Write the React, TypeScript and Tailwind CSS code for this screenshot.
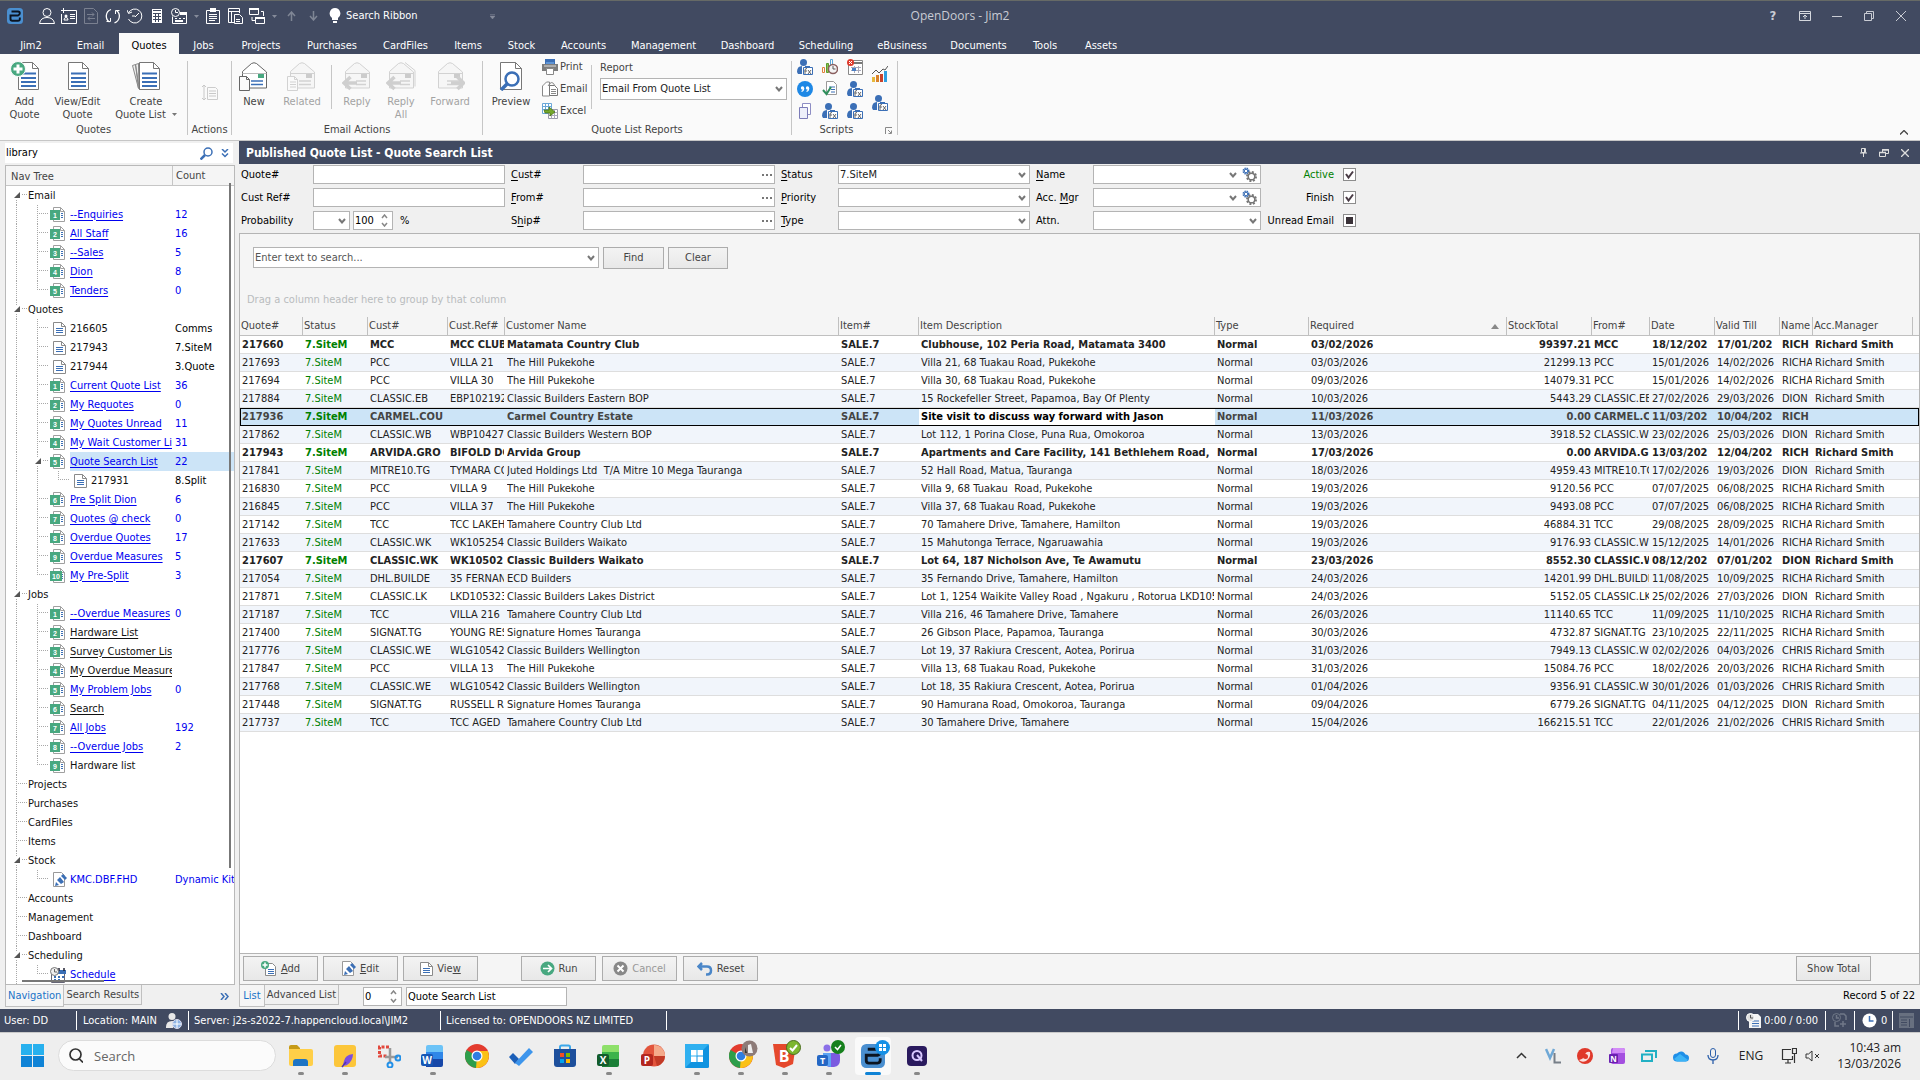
import type { ReactNode } from 'react';
import clsx from 'clsx';

/* ------------------------------------------------------------------ */
/* Data                                                                */
/* ------------------------------------------------------------------ */

const tabs = [
  { name: 'Jim2', width: 'w-[62px]' },
  { name: 'Email', width: 'w-[57px]' },
  { name: 'Quotes', width: 'w-[60px]' },
  { name: 'Jobs', width: 'w-[49px]' },
  { name: 'Projects', width: 'w-[66px]' },
  { name: 'Purchases', width: 'w-[76px]' },
  { name: 'CardFiles', width: 'w-[71px]' },
  { name: 'Items', width: 'w-[54px]' },
  { name: 'Stock', width: 'w-[53px]' },
  { name: 'Accounts', width: 'w-[71px]' },
  { name: 'Management', width: 'w-[89px]' },
  { name: 'Dashboard', width: 'w-[79px]' },
  { name: 'Scheduling', width: 'w-[78px]' },
  { name: 'eBusiness', width: 'w-[74px]' },
  { name: 'Documents', width: 'w-[79px]' },
  { name: 'Tools', width: 'w-[54px]' },
  { name: 'Assets', width: 'w-[58px]' },
];

type NavNode = {
  label: string;
  count?: string;
  depth: number;
  kind?: 'list' | 'doc' | 'edit' | 'calendar';
  num?: number;
  tone?: 'blue' | 'black';
  plain?: boolean;
  open?: boolean;
  last?: boolean;
  selected?: boolean;
};

const list = (num: number, label: string, count = '', extra: Partial<NavNode> = {}): NavNode => ({
  depth: 1, kind: 'list', num, label, count, tone: 'blue', ...extra,
});

const navTree: NavNode[] = [
  { depth: 0, label: 'Email', open: true },
  list(1, '--Enquiries', '12'),
  list(2, 'All Staff', '16'),
  list(3, '--Sales', '5'),
  list(4, 'Dion', '8'),
  list(5, 'Tenders', '0', { last: true }),
  { depth: 0, label: 'Quotes', open: true },
  { depth: 1, kind: 'doc', label: '216605', count: 'Comms', tone: 'black', plain: true },
  { depth: 1, kind: 'doc', label: '217943', count: '7.SiteM', tone: 'black', plain: true },
  { depth: 1, kind: 'doc', label: '217944', count: '3.Quote', tone: 'black', plain: true },
  list(1, 'Current Quote List', '36'),
  list(2, 'My Requotes', '0'),
  list(3, 'My Quotes Unread', '11'),
  list(4, 'My Wait Customer Lis', '31'),
  list(5, 'Quote Search List', '22', { open: true, selected: true }),
  { depth: 2, kind: 'doc', label: '217931', count: '8.Split', tone: 'black', plain: true, last: true },
  list(6, 'Pre Split Dion', '6'),
  list(7, 'Quotes @ check', '0'),
  list(8, 'Overdue Quotes', '17'),
  list(9, 'Overdue Measures', '5'),
  list(10, 'My Pre-Split', '3', { last: true }),
  { depth: 0, label: 'Jobs', open: true },
  list(1, '--Overdue Measures', '0'),
  list(2, 'Hardware List', '', { tone: 'black' }),
  list(3, 'Survey Customer List', '', { tone: 'black' }),
  list(4, 'My Overdue Measure', '', { tone: 'black' }),
  list(5, 'My Problem Jobs', '0'),
  list(6, 'Search', '', { tone: 'black' }),
  list(7, 'All Jobs', '192'),
  list(8, '--Overdue Jobs', '2'),
  list(9, 'Hardware list', '', { tone: 'black', plain: true, last: true }),
  { depth: 0, label: 'Projects' },
  { depth: 0, label: 'Purchases' },
  { depth: 0, label: 'CardFiles' },
  { depth: 0, label: 'Items' },
  { depth: 0, label: 'Stock', open: true },
  { depth: 1, kind: 'edit', label: 'KMC.DBF.FHD', count: 'Dynamic Kitt', tone: 'blue', plain: true, last: true },
  { depth: 0, label: 'Accounts' },
  { depth: 0, label: 'Management' },
  { depth: 0, label: 'Dashboard' },
  { depth: 0, label: 'Scheduling', open: true },
  { depth: 1, kind: 'calendar', label: 'Schedule', tone: 'blue', last: true },
];

const columns = [
  { name: 'Quote#', width: 'w-[63px]' },
  { name: 'Status', width: 'w-[65px]' },
  { name: 'Cust#', width: 'w-[80px]' },
  { name: 'Cust.Ref#', width: 'w-[57px]' },
  { name: 'Customer Name', width: 'w-[334px]' },
  { name: 'Item#', width: 'w-[80px]' },
  { name: 'Item Description', width: 'w-[296px]' },
  { name: 'Type', width: 'w-[94px]' },
  { name: 'Required', width: 'w-auto' },
  { name: 'StockTotal', width: 'w-[85px]' },
  { name: 'From#', width: 'w-[58px]' },
  { name: 'Date', width: 'w-[65px]' },
  { name: 'Valid Till', width: 'w-[65px]' },
  { name: 'Name', width: 'w-[33px]' },
  { name: 'Acc.Manager', width: 'w-[100px]' },
];

// quote, cust, ref, customer, description, required, total, from, date, valid till, name
const quotes: string[][] = [
  ['217660', 'MCC', 'MCC CLUB', 'Matamata Country Club', 'Clubhouse, 102 Peria Road, Matamata 3400', '03/02/2026', '99397.21', 'MCC', '18/12/202', '17/01/202', 'RICH'],
  ['217693', 'PCC', 'VILLA 21', 'The Hill Pukekohe', 'Villa 21, 68 Tuakau Road, Pukekohe', '03/03/2026', '21299.13', 'PCC', '15/01/2026', '14/02/2026', 'RICHA'],
  ['217694', 'PCC', 'VILLA 30', 'The Hill Pukekohe', 'Villa 30, 68 Tuakau Road, Pukekohe', '09/03/2026', '14079.31', 'PCC', '15/01/2026', '14/02/2026', 'RICHA'],
  ['217884', 'CLASSIC.EB', 'EBP102192', 'Classic Builders Eastern BOP', '15 Rockefeller Street, Papamoa, Bay Of Plenty', '10/03/2026', '5443.29', 'CLASSIC.EB', '27/02/2026', '29/03/2026', 'DION'],
  ['217936', 'CARMEL.COU', '', 'Carmel Country Estate', 'Site visit to discuss way forward with Jason', '11/03/2026', '0.00', 'CARMEL.C', '11/03/202', '10/04/202', 'RICH'],
  ['217862', 'CLASSIC.WB', 'WBP10427', 'Classic Builders Western BOP', 'Lot 112, 1 Porina Close, Puna Rua, Omokoroa', '13/03/2026', '3918.52', 'CLASSIC.W', '23/02/2026', '25/03/2026', 'DION'],
  ['217943', 'ARVIDA.GRO', 'BIFOLD DO', 'Arvida Group', 'Apartments and Care Facility, 141 Bethlehem Road,', '17/03/2026', '0.00', 'ARVIDA.G', '13/03/202', '12/04/202', 'RICH'],
  ['217841', 'MITRE10.TG', 'TYMARA CO', 'Juted Holdings Ltd  T/A Mitre 10 Mega Tauranga', '52 Hall Road, Matua, Tauranga', '18/03/2026', '4959.43', 'MITRE10.TG', '17/02/2026', '19/03/2026', 'DION'],
  ['216830', 'PCC', 'VILLA 9', 'The Hill Pukekohe', 'Villa 9, 68 Tuakau  Road, Pukekohe', '19/03/2026', '9120.56', 'PCC', '07/07/2025', '06/08/2025', 'RICHA'],
  ['216845', 'PCC', 'VILLA 37', 'The Hill Pukekohe', 'Villa 37, 68 Tuakau Road, Pukekohe', '19/03/2026', '9493.08', 'PCC', '07/07/2025', '06/08/2025', 'RICHA'],
  ['217142', 'TCC', 'TCC LAKEH', 'Tamahere Country Club Ltd', '70 Tamahere Drive, Tamahere, Hamilton', '19/03/2026', '46884.31', 'TCC', '29/08/2025', '28/09/2025', 'RICHA'],
  ['217633', 'CLASSIC.WK', 'WK105254', 'Classic Builders Waikato', '15 Mahutonga Terrace, Ngaruawahia', '19/03/2026', '9176.93', 'CLASSIC.W', '15/12/2025', '14/01/2026', 'RICHA'],
  ['217607', 'CLASSIC.WK', 'WK10502', 'Classic Builders Waikato', 'Lot 64, 187 Nicholson Ave, Te Awamutu', '23/03/2026', '8552.30', 'CLASSIC.W', '08/12/202', '07/01/202', 'DION'],
  ['217054', 'DHL.BUILDE', '35 FERNAN', 'ECD Builders', '35 Fernando Drive, Tamahere, Hamilton', '24/03/2026', '14201.99', 'DHL.BUILDE', '11/08/2025', '10/09/2025', 'RICHA'],
  ['217871', 'CLASSIC.LK', 'LKD105323', 'Classic Builders Lakes District', 'Lot 1, 1254 Waikite Valley Road , Ngakuru , Rotorua LKD1053', '24/03/2026', '5152.05', 'CLASSIC.LK', '25/02/2026', '27/03/2026', 'DION'],
  ['217187', 'TCC', 'VILLA 216', 'Tamahere Country Club Ltd', 'Villa 216, 46 Tamahere Drive, Tamahere', '26/03/2026', '11140.65', 'TCC', '11/09/2025', '11/10/2025', 'RICHA'],
  ['217400', 'SIGNAT.TG', 'YOUNG RES', 'Signature Homes Tauranga', '26 Gibson Place, Papamoa, Tauranga', '30/03/2026', '4732.87', 'SIGNAT.TG', '23/10/2025', '22/11/2025', 'RICHA'],
  ['217776', 'CLASSIC.WE', 'WLG10542', 'Classic Builders Wellington', 'Lot 19, 37 Rakiura Crescent, Aotea, Porirua', '31/03/2026', '7949.13', 'CLASSIC.W', '02/02/2026', '04/03/2026', 'CHRIS'],
  ['217847', 'PCC', 'VILLA 13', 'The Hill Pukekohe', 'Villa 13, 68 Tuakau Road, Pukekohe', '31/03/2026', '15084.76', 'PCC', '18/02/2026', '20/03/2026', 'RICHA'],
  ['217768', 'CLASSIC.WE', 'WLG10542', 'Classic Builders Wellington', 'Lot 18, 35 Rakiura Crescent, Aotea, Porirua', '01/04/2026', '9356.91', 'CLASSIC.W', '30/01/2026', '01/03/2026', 'CHRIS'],
  ['217448', 'SIGNAT.TG', 'RUSSELL RE', 'Signature Homes Tauranga', '90 Hamurana Road, Omokoroa, Tauranga', '09/04/2026', '6779.26', 'SIGNAT.TG', '04/11/2025', '04/12/2025', 'DION'],
  ['217737', 'TCC', 'TCC AGED', 'Tamahere Country Club Ltd', '30 Tamahere Drive, Tamahere', '15/04/2026', '166215.51', 'TCC', '22/01/2026', '21/02/2026', 'CHRIS'],
];

const boldQuotes = ['217660', '217936', '217943', '217607'];
const selectedQuote = '217936';

/* ------------------------------------------------------------------ */
/* Small icons                                                         */
/* ------------------------------------------------------------------ */

function Svg({ size = 16, w, h, box, children, className }: {
  size?: number; w?: number; h?: number; box?: string; children: ReactNode; className?: string;
}) {
  const width = w ?? size;
  const height = h ?? size;
  return (
    <svg width={width} height={height} viewBox={box ?? `0 0 ${width} ${height}`} fill="none" className={clsx('shrink-0', className)} aria-hidden="true">
      {children}
    </svg>
  );
}

const Chevron = ({ className }: { className?: string }) => (
  <Svg w={8} h={6} className={className}><path d="M1 1l3 3.500L7 1" stroke="#777" strokeWidth="2" /></Svg>
);

const Caret = ({ color = '#777' }: { color?: string }) => (
  <Svg w={5} h={3}><path d="M0 0h5L2.500 3z" fill={color} /></Svg>
);

const JimLogo = ({ size = 16 }: { size?: number }) => (
  <Svg size={size} box="0 0 16 16">
    <rect width="16" height="16" rx="3.500" fill="#4a8fd0" />
    <path d="M4.500 3.500H11q1.800 0 1.800 1.800T11 7.500H3.500V11q0 1.700 1.700 1.700H11q1.800 0 1.800-1.800V9.500" stroke="#0b1420" strokeWidth="1.900" />
  </Svg>
);

function DocIcon({ disabled }: { disabled?: boolean }) {
  return (
    <Svg w={13} h={14}>
      <path d="M.5.5h8l4 4v9H.500z" fill="#fff" stroke={disabled ? '#ccc' : '#8a8a8a'} />
      <path d="M8.500.500v4h4" stroke={disabled ? '#ccc' : '#8a8a8a'} />
      <path d="M3 6.500h7M3 8.500h7M3 10.500h7" stroke={disabled ? '#ccc' : '#3b6fb6'} />
    </Svg>
  );
}

function ListIcon({ num = 0 }: { num?: number }) {
  const wide = num > 9;
  return (
    <Svg w={15} h={15}>
      <path d="M3.500.500h7l4 4v10h-11z" fill="#fff" stroke="#a0a0a0" />
      <path d="M10.500.500v4h4" stroke="#a0a0a0" />
      <path d="M11 6.500h2M11 8.500h2M11 10.500h2" stroke="#3b6fb6" />
      <rect y="3" width={wide ? 12 : 10} height="10" fill="#48a880" />
      <text x={wide ? 6 : 5} y="11" textAnchor="middle" fontSize="7" fontWeight="700" fill="#fff" fontFamily="Liberation Sans, sans-serif">{num}</text>
    </Svg>
  );
}

const EditIcon = () => (
  <Svg w={14} h={15}>
    <path d="M.5.5h8l3 3v11H.500z" fill="#fff" stroke="#999" />
    <path d="M2 14l1-4 3 3zM4 8l3-3 4 5-3 2zM8 4l2-2 4 4-2 2z" fill="#3b6fb6" />
  </Svg>
);

const CalendarIcon = () => (
  <Svg w={16} h={16}>
    <path d="M1.500 6.500h13v9h-13z" fill="#fff" stroke="#667" />
    <path d="M7 3h9v4H7z" fill="#3b6fb6" />
    <path d="M9 1v3M14 1v3" stroke="#223" strokeWidth="1.500" />
    <path d="M4 9h2v2H4zM8 9h2v2H8zM12 9h2v2h-2zM4 12h2v2H4zM8 12h2v2H8z" fill="#3b6fb6" />
    <circle cx="4.500" cy="4.500" r="4" fill="#eee" stroke="#777" />
    <path d="M4.500 2v3H7" stroke="#666" />
  </Svg>
);

const AddDocIcon = () => (
  <Svg w={16} h={15}>
    <path d="M4.500 2.500h7l3 3v9h-10z" fill="#fff" stroke="#8a8a8a" />
    <path d="M7 8.500h6M7 10.500h6M7 12.500h6" stroke="#3b6fb6" />
    <circle cx="4" cy="4" r="4" fill="#48a880" />
    <path d="M4 1.500v5M1.500 4h5" stroke="#fff" strokeWidth="1.500" />
  </Svg>
);

function BigDoc({ plus, stack }: { plus?: boolean; stack?: boolean }) {
  return (
    <Svg w={30} h={30} box={plus || stack ? '0 0 30 30' : '3 0 30 30'}>
      {stack && <path d="M1.500 4.500l3-1 3 24zM4.500 3.500l3-1 1 26zM7.500 2.500l3-1v27h-2z" fill="#eee" stroke="#888" />}
      <path d="M8.500 1.500h14l6 6v21h-20z" fill="#fff" stroke="#777" />
      <path d="M22.500 1.500v6h6" stroke="#777" />
      <path d="M11 12.500h15M11 17h15M11 21h15M11 25h15" stroke="#3b6fb6" strokeWidth="2" />
      {plus && (
        <>
          <circle cx="8" cy="8" r="7.500" fill="#48a880" stroke="#fafafa" />
          <path d="M8 3.500v9M3.500 8h9" stroke="#fff" strokeWidth="3" />
        </>
      )}
    </Svg>
  );
}

function Envelope({ kind }: { kind: 'new' | 'related' | 'reply' | 'replyAll' | 'forward' }) {
  const off = kind !== 'new';
  const line = off ? '#d2d2d2' : '#666';
  return (
    <Svg w={30} h={30}>
      {kind === 'replyAll' && <path d="M19 1.500l10 8v16" stroke={line} />}
      <path d="M3.500 10.500l9-8q2.500-1.500 5 0l10 8.500v16h-24z" fill={off ? '#f6f6f6' : '#fff'} stroke={line} />
      <path d="M3.500 12.500h24" stroke={off ? line : '#bbb'} />
      <rect x="19" y="13" width="6" height="4" fill={off ? '#ccc' : '#48a880'} />
      <path d={kind === 'reply' || kind === 'replyAll' ? 'M14 20h10M14 23.500h10' : 'M12 20h12M12 23.500h12'} stroke={off ? '#d2d2d2' : '#3b6fb6'} strokeWidth="1.500" />
      {(kind === 'new' || kind === 'related') && (
        <>
          <path d="M.5 15.500h7l3 3v11H.500z" fill="#fafafa" stroke={line} />
          <path d="M7.500 15.500v3h3" stroke={line} />
          {off && <path d="M3 21h6M3 23.500h6M3 26h6" stroke={line} />}
        </>
      )}
      {(kind === 'reply' || kind === 'replyAll') && <path d="M8.500 16l-6.500 6 6.500 6M2 22h13" stroke="#cfcfcf" strokeWidth="3.500" />}
      {kind === 'forward' && <path d="M22.500 16l6 6-6 6M28 22H16" stroke="#cfcfcf" strokeWidth="3.500" />}
    </Svg>
  );
}

const PreviewIcon = () => (
  <Svg w={24} h={30}>
    <path d="M1.500 1.500h15l6 6v21h-21z" fill="#fff" stroke="#777" />
    <path d="M16.500 1.500v6h6" stroke="#777" />
    <circle cx="13" cy="18" r="6.500" fill="#fff" stroke="#3b6fb6" strokeWidth="2.500" />
    <path d="M8 23l-6 6" stroke="#3b6fb6" strokeWidth="3.500" />
  </Svg>
);

const PrinterIcon = () => (
  <Svg size={16}>
    <path d="M3 0h10v6H3z" fill="#3b6fb6" /><path d="M4 3h8v3H4z" fill="#5f95d6" />
    <path d="M0 5h16v7H0z" fill="#7d7d7d" /><path d="M2 7h12" stroke="#ddd" />
    <path d="M4.500 9.500h7v6h-7z" fill="#fff" stroke="#888" />
  </Svg>
);

const MailDocIcon = () => (
  <Svg size={16}>
    <path d="M.5 5l4-4h3v14h-7z" fill="#fff" stroke="#888" />
    <path d="M6 5q4-7 7 0" stroke="#888" />
    <path d="M7.500 4.500h5l3 3v7h-8z" fill="#fff" stroke="#777" />
    <path d="M9 8.500h5M9 10.500h5M9 12.500h5" stroke="#888" />
  </Svg>
);

const ExcelSmallIcon = () => (
  <Svg size={16}>
    <path d="M.5.5h9v10h-9z" fill="#fff" stroke="#6aa7d8" /><path d="M.5 3.500h9M.5 6.500h9M3.500.500v10M6.500.500v10" stroke="#6aa7d8" />
    <path d="M6.500 6.500h9v9h-9z" fill="#fff" stroke="#99a" /><path d="M6.500 9.500h9M6.500 12.500h9M9.500 6.500v9M12.500 6.500v9" stroke="#aab" />
    <path d="M2 7h5V4l6 5-5 4v-3H3z" fill="#74a82c" stroke="#426b12" strokeWidth=".7" />
  </Svg>
);

const PersonFx = () => (
  <Svg size={16}>
    <circle cx="6.500" cy="3.500" r="3.500" fill="#3b6fb6" />
    <path d="M0 13q0-6 5-6v8H1z" fill="#3b6fb6" /><path d="M8 7h5v1H8z" fill="#3b6fb6" />
    <path d="M6.500 8.500h9v7h-9z" fill="#fff" stroke="#3b6fb6" />
    <path d="M8 15v-4q0-1.500 2-1.500M7.500 12h2.500M11 11l3 4M14 11l-3 4" stroke="#555" strokeWidth=".9" />
  </Svg>
);

const ChartClock = () => (
  <Svg size={16}>
    <path d="M.5 8.500h2v5h-2z" stroke="#e0803a" /><path d="M4.500 4.500h2v9h-2z" fill="#8cc152" stroke="#5c9a2c" /><path d="M8.500.500h2v6h-2z" stroke="#58a6d8" />
    <circle cx="11" cy="10" r="4.500" fill="#f4f4f4" stroke="#8a5f5f" strokeWidth="1.500" /><path d="M11 7v3h2.500" stroke="#555" />
  </Svg>
);

const CalendarAlert = () => (
  <Svg size={16}>
    <path d="M1.500 1.500h14v14h-14z" fill="#fff" stroke="#888" /><path d="M2 4h13" stroke="#777" strokeWidth="2" />
    <path d="M4 8.500h10M4 11.500h10M7.500 7v7M11.500 7v7" stroke="#aab" /><path d="M5 9h4v3H5z" fill="#4a7fc4" />
    <circle cx="3.500" cy="3.500" r="3.500" fill="#e03a2c" /><path d="M2 2l3 3M5 2L2 5" stroke="#fff" />
  </Svg>
);

const QuoteBubble = () => (
  <Svg size={16}>
    <circle cx="8" cy="8" r="8" fill="#1e88e5" />
    <circle cx="5.500" cy="7" r="1.700" fill="#fff" /><circle cx="10.500" cy="7" r="1.700" fill="#fff" />
    <path d="M6.700 7q0 3-2.200 3.500M11.700 7q0 3-2.200 3.500" stroke="#fff" strokeWidth="1.200" />
  </Svg>
);

const DocCheck = () => (
  <Svg size={16}>
    <path d="M4.500.500h7l3 3v10h-10z" fill="#fff" stroke="#999" /><path d="M7 6h6M9 8.500h4M9 11h4" stroke="#3b6fb6" />
    <path d="M1 9l3.500 4L9 6" stroke="#2f8f5b" strokeWidth="2" />
  </Svg>
);

const CopyPages = () => (
  <Svg size={16}>
    <path d="M5.500.500h8v11h-8z" fill="#fff" stroke="#8e8ec4" /><path d="M2.500 4.500h8v11h-8z" fill="#eef0fa" stroke="#7c7cb8" />
  </Svg>
);

const BarsIcon = () => (
  <Svg size={16}>
    <path d="M0 11h3v5H0z" fill="#e6b93d" /><path d="M4 9h3v7H4z" fill="#d9822b" /><path d="M8 8h3v8H8z" fill="#c8432b" /><path d="M12 5h3v11h-3z" fill="#2f9fe0" />
    <path d="M0 8l4-4 3 3 4-4 2 1 3-4" stroke="#555" />
  </Svg>
);

const GearsIcon = () => (
  <Svg w={15} h={15}>
    <circle cx="4" cy="4" r="2.500" stroke="#3b6fb6" strokeWidth="2" strokeDasharray="1.300 .7" /><circle cx="4" cy="4" r="1.800" stroke="#3b6fb6" />
    <circle cx="9.500" cy="9.500" r="4.500" stroke="#777" strokeWidth="2" strokeDasharray="2 1.500" /><circle cx="9.500" cy="9.500" r="3.300" stroke="#777" strokeWidth="1.500" />
  </Svg>
);

/* ------------------------------------------------------------------ */
/* Title bar and ribbon                                                */
/* ------------------------------------------------------------------ */

function QuickButton({ label, narrow, children }: { label: string; narrow?: boolean; children: ReactNode }) {
  return (
    <button aria-label={label} className={clsx('flex h-6 items-center justify-center', narrow ? 'w-3' : 'w-[22px]')}>
      {children}
    </button>
  );
}

function TitleBar() {
  return (
    <header className="grid h-[33px] grid-cols-[1fr_auto_1fr] items-center border-t border-[#666a66] bg-[#414a61] pb-[2px] text-white">
      <div className="flex items-center pl-[7px]">
        <JimLogo />
        <div className="flex items-center pl-[13px]">
          <QuickButton label="User"><Svg><circle cx="8" cy="4.500" r="4" stroke="#fff" /><path d="M.5 15.500q1-6 7.500-6t7.500 6z" stroke="#fff" /></Svg></QuickButton>
          <QuickButton label="Card"><Svg><path d="M5 2.500h10.500v13H.500V6" stroke="#fff" /><path d="M2.500 0v5M0 2.500h5" stroke="#fff" /><path d="M3 12q0-2.500 2-2.500t2 2.500zM9 6.500h5M9 8.500h5M9 10.500h5" stroke="#fff" /><circle cx="5" cy="8" r="1.500" fill="#fff" /></Svg></QuickButton>
          <QuickButton label="Transfer"><Svg><path d="M1.500.500h9l4 4v11h-13z" stroke="#7a8090" /><path d="M4 6.500h7M9 4.500l2 2-2 2M12 10.500H5M7 8.500l-2 2 2 2" stroke="#7a8090" /></Svg></QuickButton>
          <QuickButton label="Refresh"><Svg><path d="M4.500 14A7 7 0 0 1 6 1.500M9.500 14.800A7 7 0 0 0 11.500 2.500" stroke="#fff" strokeWidth="1.300" /><path d="M1.500 13.500h4v-3.500M14.500 2.500h-4V6" stroke="#fff" /></Svg></QuickButton>
          <QuickButton label="History"><Svg><path d="M1.500 5a7 7 0 1 1 0 6M0 2l1.500 3.500L5 4M8 9l4-4M5 8h3" stroke="#fff" /></Svg></QuickButton>
          <QuickButton label="Calculator"><Svg><path d="M3 1h10v14H3z" fill="#fff" /><path d="M4 2.500h8M4 5.500h8M4 8.500h8M4 11.500h8M6.500 5v9M9.500 5v9" stroke="#414a61" /></Svg></QuickButton>
          <QuickButton label="Schedule"><Svg><path d="M1.500 8.500v7h14v-11h-6" stroke="#fff" /><path d="M9 4h7v3H9zM4 10h2v1H4zM8 10h2v1H8zM12 10h2v1h-2zM4 12h8v2H4z" fill="#fff" /><circle cx="4.500" cy="4.500" r="4" stroke="#fff" /><path d="M4.500 2v2.500H7" stroke="#fff" /></Svg></QuickButton>
          <QuickButton label="More schedules" narrow><Caret color="#858b9a" /></QuickButton>
          <QuickButton label="Clipboard"><Svg><path d="M1.500 2.500h13v13h-13z" stroke="#fff" /><path d="M5 0h6v4H5z" fill="#fff" /><path d="M4 6.500h8M4 8.500h8M4 10.500h8M4 12.500h6" stroke="#fff" /></Svg></QuickButton>
          <QuickButton label="Report"><Svg><path d="M7 14.500H1.500V.500h11V5M1 3.500h12M4.500 4v10" stroke="#fff" /><path d="M7.500 6.500h5l3 3v6h-8z" stroke="#fff" /><path d="M9 11.500h4M9 13.500h4" stroke="#fff" /></Svg></QuickButton>
          <QuickButton label="Windows"><Svg><path d="M.5.500h9v6h-9zM6.500 9.500h9v6h-9zM12 3.500h2.500V8M3 9v3.500h3" stroke="#fff" /><path d="M0 1h10M6 10h10" stroke="#fff" strokeWidth="2" /></Svg></QuickButton>
          <QuickButton label="More windows" narrow><Caret color="#858b9a" /></QuickButton>
          <QuickButton label="Up"><Svg w={9} h={10}><path d="M4.500 10V1M1 5l3.500-4L8 5" stroke="#7f8695" strokeWidth="1.500" /></Svg></QuickButton>
          <QuickButton label="Down"><Svg w={9} h={10}><path d="M4.500 0v9M1 5l3.500 4L8 5" stroke="#7f8695" strokeWidth="1.500" /></Svg></QuickButton>
        </div>
        <button className="flex items-center gap-[5px] pl-[5px]">
          <Svg w={12} h={16}><path d="M6 0a5.500 5.500 0 0 1 3 10v2H3v-2A5.500 5.500 0 0 1 6 0zM4 13h4v2H4z" fill="#fff" /></Svg>
          <span>Search Ribbon</span>
        </button>
        <span className="pl-[72px]"><Svg w={5} h={5}><path d="M0 .5h5M0 2h5L2.500 5z" stroke="#858b9a" strokeWidth=".5" fill="#858b9a" /></Svg></span>
      </div>
      <h1 className="font-['Open_Sans',sans-serif] text-xs text-[#c9ccd4]">OpenDoors - Jim2</h1>
      <div className="flex items-center justify-end pr-[3px]">
        {[
          { label: 'Help', icon: <span className="text-[13px] font-bold text-[#c9ccd4]">?</span> },
          { label: 'Ribbon display', icon: <Svg w={12} h={10}><path d="M.5.500h11v9H.500zM.5 2.500h11M6 8V4M4 6l2-2 2 2" stroke="#d5d8de" /></Svg> },
          { label: 'Minimise', icon: <Svg w={10} h={10}><path d="M0 5.500h10" stroke="#c9ccd4" /></Svg> },
          { label: 'Restore', icon: <Svg w={10} h={10}><path d="M.5 2.500h7v7h-7zM2.500 2V.500h7v7H8" stroke="#c9ccd4" /></Svg> },
          { label: 'Close', icon: <Svg w={10} h={10}><path d="M0 0l10 10M10 0L0 10" stroke="#c9ccd4" /></Svg> },
        ].map((b) => (
          <button key={b.label} aria-label={b.label} className="flex h-6 w-8 items-center justify-center">{b.icon}</button>
        ))}
      </div>
    </header>
  );
}

function TabBar() {
  return (
    <nav className="flex h-[21px] bg-[#414a61]">
      {tabs.map((tab) => (
        <button
          key={tab.name}
          className={clsx('shrink-0 pt-1 text-center', tab.width, tab.name === 'Quotes' ? 'bg-[#fafafa] text-black' : 'text-white')}
        >
          {tab.name}
        </button>
      ))}
    </nav>
  );
}

function BigButton({ icon, lines, disabled, width, caret }: {
  icon: ReactNode; lines: string[]; disabled?: boolean; width: string; caret?: boolean;
}) {
  return (
    <button disabled={disabled} className={clsx('flex flex-col items-center leading-[13px]', width, disabled ? 'text-[#a3a3a3]' : 'text-[#444]')}>
      <span className="mb-1 flex h-[30px] items-center">{icon}</span>
      {lines.map((line, i) => (
        <span key={line} className="flex items-center gap-[6px] whitespace-nowrap">
          {line}
          {caret && i === 1 && <Caret />}
        </span>
      ))}
    </button>
  );
}

function RibbonGroup({ title, width, children, launcher }: { title: string; width: string; children: ReactNode; launcher?: boolean }) {
  return (
    <section className={clsx('relative flex flex-col border-r border-[#c6c6c6] text-[#444]', width)}>
      <div className="flex flex-1">{children}</div>
      <h2 className={clsx('text-center leading-[10px]', launcher && 'pr-4')}>{title}</h2>
      {launcher && (
        <span className="absolute right-[5px] bottom-px">
          <Svg w={7} h={7}><path d="M.5 7V.500H7M3 3l3 3M6.500 3.500v3h-3" stroke="#888" /></Svg>
        </span>
      )}
    </section>
  );
}

function Ribbon() {
  const scripts = [<PersonFx />, <ChartClock />, <CalendarAlert />, <QuoteBubble />, <DocCheck />, <PersonFx />, <CopyPages />, <PersonFx />, <PersonFx />];
  return (
    <div className="flex h-[87px] border-b border-[#c6c6c6] bg-[#fafafa] pt-[7px] pb-[5px]">
      <RibbonGroup title="Quotes" width="w-[188px]">
        <BigButton icon={<BigDoc plus />} lines={['Add', 'Quote']} width="w-[49px]" />
        <BigButton icon={<BigDoc />} lines={['View/Edit', 'Quote']} width="w-[57px]" />
        <BigButton icon={<BigDoc stack />} lines={['Create', 'Quote List']} width="w-[80px]" caret />
      </RibbonGroup>
      <RibbonGroup title="Actions" width="w-11">
        <button disabled aria-label="Action" className="mx-auto">
          <Svg w={16} h={16}><path d="M5.500 2.500h8l2 2v10h-10z" stroke="#ccc" /><path d="M7 6h7M7 8.500h7M7 11h7M2 0v15M0 2l2-2 2 2M0 13l2 2 2-2" stroke="#c8c8c8" /></Svg>
        </button>
      </RibbonGroup>
      <RibbonGroup title="Email Actions" width="w-[251px]">
        <BigButton icon={<Envelope kind="new" />} lines={['New']} width="w-[44px]" />
        <BigButton icon={<Envelope kind="related" />} lines={['Related']} width="w-[52px]" disabled />
        <span className="mx-[3px] mt-1 h-11 border-l border-[#c6c6c6]" />
        <BigButton icon={<Envelope kind="reply" />} lines={['Reply']} width="w-[44px]" disabled />
        <BigButton icon={<Envelope kind="replyAll" />} lines={['Reply', 'All']} width="w-[44px]" disabled />
        <BigButton icon={<Envelope kind="forward" />} lines={['Forward']} width="w-[54px]" disabled />
      </RibbonGroup>
      <RibbonGroup title="Quote List Reports" width="w-[309px]">
        <BigButton icon={<PreviewIcon />} lines={['Preview']} width="w-[56px]" />
        <div className="-mt-[5px] flex w-[52px] flex-col pl-[3px]">
          {[{ t: 'Print', i: <PrinterIcon /> }, { t: 'Email', i: <MailDocIcon /> }, { t: 'Excel', i: <ExcelSmallIcon /> }].map((b) => (
            <button key={b.t} className="flex h-[22px] items-center gap-[2px]">{b.i}<span>{b.t}</span></button>
          ))}
        </div>
        <span className="mt-1 h-11 border-l border-[#c6c6c6]" />
        <div className="flex flex-col pl-2">
          <label htmlFor="report" className="leading-[13px]">Report</label>
          <Select id="report" value="Email From Quote List" className="mt-1 h-[22px] w-[187px]" />
        </div>
      </RibbonGroup>
      <RibbonGroup title="Scripts" width="w-[106px]" launcher>
        <div className="-mt-[5px] grid h-[66px] grid-cols-3 items-center">
          {scripts.map((icon, i) => (
            <button key={i} aria-label={`Script ${i + 1}`} className="flex w-[25px] justify-center">{icon}</button>
          ))}
        </div>
        <div className="flex w-[25px] flex-col items-center gap-[13px] pt-[5px]">
          <button aria-label="Statistics"><BarsIcon /></button>
          <button aria-label="Script 10"><PersonFx /></button>
        </div>
      </RibbonGroup>
      <button aria-label="Collapse ribbon" className="mt-auto ml-auto px-3"><Svg w={8} h={5}><path d="M0 4.500l4-4 4 4" stroke="#444" strokeWidth="1.300" /></Svg></button>
    </div>
  );
}

/* ------------------------------------------------------------------ */
/* Form controls                                                       */
/* ------------------------------------------------------------------ */

function Select({ id, value = '', className, gears }: { id: string; value?: string; className?: string; gears?: boolean }) {
  return (
    <div className={clsx('relative flex border border-[#b4b4b4] bg-white', className)}>
      <select id={id} defaultValue={value} className="w-full appearance-none bg-transparent px-px text-[#222] outline-none">
        <option>{value}</option>
      </select>
      <span className="pointer-events-none absolute inset-y-0 right-[3px] flex items-center gap-[5px]">
        <Chevron />
        {gears && <GearsIcon />}
      </span>
    </div>
  );
}

function TextBox({ id, dots }: { id: string; dots?: boolean }) {
  return (
    <div className="relative flex h-[19px] border border-[#b4b4b4] bg-white">
      <input id={id} type="text" className="w-full bg-transparent px-px outline-none" />
      {dots && (
        <button type="button" aria-label="Browse" className="absolute inset-y-0 right-[2px] flex items-center">
          <Svg w={10} h={2}><path d="M0 0h2v2H0zM4 0h2v2H4zM8 0h2v2H8z" fill="#777" /></Svg>
        </button>
      )}
    </div>
  );
}

function Spinner({ id, label, value, className }: { id: string; label: string; value: string; className?: string }) {
  return (
    <div className={clsx('flex h-[19px] items-center border border-[#b4b4b4] bg-white pr-1', className)}>
      <input id={id} aria-label={label} type="text" defaultValue={value} className="w-full min-w-0 px-px outline-none" />
      <Svg w={7} h={13}><path d="M1 4l2.500-3L6 4M1 9l2.500 3L6 9" stroke="#888" strokeWidth="1.500" /></Svg>
    </div>
  );
}

// A label whose mnemonic letter is underlined, marked with & in the text
function Label({ id, text }: { id: string; text: string }) {
  const at = text.indexOf('&');
  return (
    <label htmlFor={id} className="leading-[17px]">
      {at < 0 ? text : <>{text.slice(0, at)}<u className="underline-offset-2">{text[at + 1]}</u>{text.slice(at + 2)}</>}
    </label>
  );
}

function Check({ id, label, green, mixed }: { id: string; label: string; green?: boolean; mixed?: boolean }) {
  return (
    <>
      <label htmlFor={id} className={clsx('text-right leading-[17px]', green && 'text-[#008000]')}>{label}</label>
      <span className="relative ml-[9px] h-[13px] w-[13px]">
        <input id={id} type="checkbox" defaultChecked={!mixed} className="block h-[13px] w-[13px] appearance-none border border-[#8c8c8c] bg-white" />
        <span className="pointer-events-none absolute inset-0">
          <Svg w={13} h={13}>
            {mixed ? <path d="M3 3h7v7H3z" fill="#3a3238" /> : <path d="M3 6l2.500 3.500L10 3.500" stroke="#4a3c46" strokeWidth="2" />}
          </Svg>
        </span>
      </span>
    </>
  );
}

function Filters() {
  return (
    <form className="grid grid-cols-[72px_192px_6px_72px_192px_6px_57px_192px_6px_57px_168px_73px_22px] items-center gap-y-1 border-b border-[#b4b4b4] bg-[#f0f0f0] pt-px pb-[3px] pl-[2px] text-black">
      <Label id="quoteNo" text="Quote#" />
      <TextBox id="quoteNo" />
      <span />
      <Label id="custNo" text="&Cust#" />
      <TextBox id="custNo" dots />
      <span />
      <Label id="status" text="&Status" />
      <Select id="status" value="7.SiteM" className="h-[19px]" />
      <span />
      <Label id="name" text="&Name" />
      <Select id="name" className="h-[19px]" gears />
      <Check id="active" label="Active" green />

      <Label id="custRef" text="Cust Ref#" />
      <TextBox id="custRef" />
      <span />
      <Label id="fromNo" text="&From#" />
      <TextBox id="fromNo" dots />
      <span />
      <Label id="priority" text="&Priority" />
      <Select id="priority" className="h-[19px]" />
      <span />
      <Label id="accMgr" text="Acc. &Mgr" />
      <Select id="accMgr" className="h-[19px]" gears />
      <Check id="finish" label="Finish" />

      <Label id="probability" text="Probability" />
      <div className="flex items-center gap-[3px]">
        <Select id="probability" className="h-[19px] w-[37px]" />
        <Spinner id="percent" label="Probability percent" value="100" className="w-10" />
        <span className="pl-1">%</span>
      </div>
      <span />
      <Label id="shipNo" text="S&hip#" />
      <TextBox id="shipNo" dots />
      <span />
      <Label id="type" text="&Type" />
      <Select id="type" className="h-[19px]" />
      <span />
      <Label id="attn" text="Attn." />
      <Select id="attn" className="h-[19px]" />
      <Check id="unread" label="Unread Email" mixed />
    </form>
  );
}

/* ------------------------------------------------------------------ */
/* Navigation tree                                                     */
/* ------------------------------------------------------------------ */

function TreeCell({ up = true, down = true, across, open }: { up?: boolean; down?: boolean; across?: boolean; open?: boolean }) {
  return (
    <Svg w={21} h={19}>
      <g stroke="#a8a8a8" strokeDasharray="1 1">
        {up && <path d="M10.500 0v9" />}
        {down && <path d="M10.500 10v9" />}
        {across && <path d="M10 8.500h11" />}
      </g>
      {open && <><path d="M8 5h8v9H8z" fill="#fff" /><path d="M14 6v6H8z" fill="#555" /></>}
    </Svg>
  );
}

function NavRow({ node, first }: { node: NavNode; first: boolean }) {
  const icon = {
    list: <ListIcon num={node.num} />,
    doc: <DocIcon />,
    edit: <EditIcon />,
    calendar: <CalendarIcon />,
  };
  return (
    <li className="flex h-[19px] items-center">
      <div className="flex h-full w-[166px] shrink-0 items-center overflow-hidden">
        {node.depth === 0 && <TreeCell up={!first} across open={node.open} />}
        {node.depth > 0 && <TreeCell />}
        {node.depth === 1 && <TreeCell across down={!node.last} open={node.open} />}
        {node.depth === 2 && <><TreeCell /><TreeCell across down={false} /></>}
        {node.kind && (
          <span className={clsx('flex w-[22px] shrink-0', node.kind === 'doc' || node.kind === 'edit' ? 'pl-[5px]' : 'pl-[2px]')}>
            {icon[node.kind]}
          </span>
        )}
        <a
          href="#"
          className={clsx(
            'flex h-full items-center whitespace-nowrap',
            node.tone === 'blue' ? 'text-[#0000f0]' : 'text-[#111]',
            node.depth === 0 && 'pl-px',
            node.depth > 0 && !node.plain && 'underline underline-offset-2',
            node.selected && 'grow bg-[#cce4f7]',
          )}
        >
          {node.label}
        </a>
      </div>
      <span className={clsx('flex h-full grow items-center overflow-hidden pl-[3px] whitespace-nowrap', node.tone === 'blue' ? 'text-[#0000f0]' : 'text-black', node.selected && 'bg-[#cce4f7]')}>
        {node.count}
      </span>
    </li>
  );
}

function NavPanel() {
  return (
    <aside className="flex w-[239px] shrink-0 flex-col pl-[5px]">
      <div className="mt-[2px] mr-[6px] flex h-5 items-center gap-2 bg-white pr-1">
        <input aria-label="Search navigation" type="text" defaultValue="library" className="w-0 grow px-px outline-none" />
        <Svg w={13} h={13}><circle cx="8" cy="5" r="4" stroke="#3b6fb6" strokeWidth="1.500" /><path d="M5 8l-4.500 4.500" stroke="#3b6fb6" strokeWidth="2.500" /></Svg>
        <Svg w={8} h={9}><path d="M1 0l3 3 3-3M1 4.500l3 3 3-3" stroke="#3b6fb6" strokeWidth="1.500" /></Svg>
      </div>
      <div className="relative mt-[2px] mr-1 flex-1 overflow-hidden border border-[#b9b9b9] bg-white">
        <div className="flex h-5 items-center border-b border-[#c6c6c6] bg-[#f5f5f5] text-[#444]">
          <span className="h-full w-[167px] border-r border-[#c6c6c6] pl-[5px] leading-[21px]">Nav Tree</span>
          <span className="pl-[3px] leading-[21px]">Count</span>
        </div>
        <ul>
          {navTree.map((node, i) => <NavRow key={i} node={node} first={i === 0} />)}
        </ul>
        {/* overlay scroll thumbs */}
        <span className="absolute top-[17px] right-[3px] bottom-[116px] w-[2px] bg-[#777]" />
        <span className="absolute bottom-[2px] left-4 h-[2px] w-[82px] bg-[#777]" />
      </div>
      <div className="flex h-6 items-start">
        <button className="h-[22px] border-x border-b border-[#c0c0c0] bg-[#f5f5f5] px-[2px] text-[#1a73c8]">Navigation</button>
        <button className="h-5 border-r border-b border-[#c0c0c0] px-[2px] text-[#444]">Search Results</button>
        <button aria-label="More" className="ml-auto pt-2 pr-[10px]"><Svg w={9} h={7}><path d="M1 0l3 3.500L1 7M5 0l3 3.500L5 7" stroke="#3b6fb6" strokeWidth="1.500" /></Svg></button>
      </div>
    </aside>
  );
}

/* ------------------------------------------------------------------ */
/* Quote grid                                                          */
/* ------------------------------------------------------------------ */

function QuoteTable() {
  return (
    <table className="w-full table-fixed border-separate border-spacing-0">
      <thead>
        <tr className="h-[19px]">
          {columns.map((col) => (
            <th key={col.name} className={clsx('overflow-hidden border-r border-b border-[#c0c0c0] bg-[#f5f5f5] p-0 pl-px text-left font-normal whitespace-nowrap text-[#444]', col.width)}>
              <span className="flex items-center justify-between">
                {col.name}
                {col.name === 'Required' && <span className="pr-[7px]"><Svg w={8} h={5}><path d="M0 5h8L4 0z" fill="#888" /></Svg></span>}
              </span>
            </th>
          ))}
          <th className="w-[6px] border-b border-[#c0c0c0] bg-[#f5f5f5] p-0" />
        </tr>
      </thead>
      <tbody>
        {quotes.map((q, i) => {
          const [no, cust, ref, customer, description, required, total, from, date, valid, name] = q;
          const selected = no === selectedQuote;
          const cells = [no, '7.SiteM', cust, ref, customer, 'SALE.7', description, 'Normal', required, total, from, date, valid, name, selected ? '' : 'Richard Smith', ''];
          return (
            <tr
              key={no}
              className={clsx(
                boldQuotes.includes(no) && 'font-bold',
                selected ? 'bg-[#cce4f7] text-[#444] outline-1 -outline-offset-1 outline-black' : 'text-[#222]',
                !selected && i % 2 === 1 && 'bg-[#f1f5fb]',
              )}
            >
              {cells.map((cell, c) => (
                <td
                  key={c}
                  className={clsx(
                    'h-[18px] border-b border-[#dedede] p-0 pr-px pl-[2px]',
                    c === 1 && 'text-[#008000]',
                    c === 9 && 'text-right',
                    c === 6 && selected && 'bg-white text-black',
                  )}
                >
                  <div className="h-[17px] overflow-hidden leading-[17px] whitespace-pre">{cell}</div>
                </td>
              ))}
            </tr>
          );
        })}
      </tbody>
    </table>
  );
}

function Button({ children, disabled, width = 'w-[75px]', height = 'h-[25px]' }: { children: ReactNode; disabled?: boolean; width?: string; height?: string }) {
  return (
    <button disabled={disabled} className={clsx('flex items-center justify-center gap-1 border border-[#acacac] bg-linear-to-b from-[#f3f3f3] to-[#e8e8e8]', width, height, disabled ? 'text-[#999]' : 'text-[#444]')}>
      {children}
    </button>
  );
}

function QuotePanel() {
  return (
    <main className="flex min-w-0 flex-1 flex-col">
      <div className="flex h-[23px] items-center justify-between bg-[#414a61] pr-[11px] pl-[7px] text-white">
        <h2 className="text-xs font-bold">Published Quote List - Quote Search List</h2>
        <div className="flex items-center gap-3">
          <button aria-label="Pin"><Svg w={7} h={9}><path d="M1.500.500h4v4h-4zM0 5h7M3.500 5v4M4.500 0v5" stroke="#ddd" /></Svg></button>
          <button aria-label="Restore panel"><Svg w={10} h={8}><path d="M.5 3.500h6v4h-6zM3.500 3V.500h6v4H7" stroke="#ddd" /><path d="M0 3.500h7M3 1h7" stroke="#ddd" strokeWidth="1.500" /></Svg></button>
          <button aria-label="Close panel"><Svg w={8} h={8}><path d="M0 0l8 8M8 0L0 8" stroke="#ddd" strokeWidth="1.300" /></Svg></button>
        </div>
      </div>
      <Filters />

      <div className="flex flex-1 flex-col border-x border-[#b4b4b4] bg-white">
        <div className="flex h-[83px] flex-col bg-[#f5f5f5] pt-[13px]">
          <div className="flex gap-1 pl-[13px]">
            <div className="relative flex h-[21px] w-[346px] border border-[#b4b4b4] bg-white">
              <input aria-label="Search quotes" type="text" placeholder="Enter text to search..." className="w-full px-px outline-none placeholder:text-[#555]" />
              <span className="absolute inset-y-0 right-[3px] flex items-center"><Chevron /></span>
            </div>
            <Button width="w-[61px]" height="h-[22px]">Find</Button>
            <Button width="w-[60px]" height="h-[22px]">Clear</Button>
          </div>
          <p className="pt-[23px] pl-[7px] text-[#b9bcbe]">Drag a column header here to group by that column</p>
        </div>
        <QuoteTable />
      </div>

      <div className="flex h-8 items-center gap-[33px] border border-[#b4b4b4] bg-[#f5f5f5] px-[3px] pb-px">
        <div className="flex gap-[5px]">
          <Button><AddDocIcon /><span><u>A</u>dd</span></Button>
          <Button><EditIcon /><span><u>E</u>dit</span></Button>
          <Button><DocIcon /><span>Vie<u>w</u></span></Button>
        </div>
        <div className="flex gap-[6px] pl-[10px]">
          <Button>
            <Svg w={15} h={15}><circle cx="7.500" cy="7.500" r="7" fill="#48a880" /><path d="M3 7.500h8M8 4l3.500 3.500L8 11" stroke="#fff" strokeWidth="1.700" /></Svg>
            Run
          </Button>
          <Button disabled>
            <Svg w={15} h={15}><circle cx="7.500" cy="7.500" r="7" fill="#888" /><path d="M4.500 4.500l6 6M10.500 4.500l-6 6" stroke="#fff" strokeWidth="2" /></Svg>
            Cancel
          </Button>
          <Button>
            <Svg w={16} h={14}><path d="M5 1L1.500 4.500 5 8M2 4.500h8q4 0 4 4t-4 4H9" stroke="#4a86c8" strokeWidth="2.500" /></Svg>
            Reset
          </Button>
        </div>
        <span className="mr-[45px] ml-auto"><Button>Show Total</Button></span>
      </div>

      <div className="flex h-6 items-start">
        <button className="h-[22px] w-[26px] border-x border-b border-[#c0c0c0] bg-[#f5f5f5] text-[#1a73c8]">List</button>
        <button className="h-5 w-[74px] border-r border-b border-[#c0c0c0] text-[#444]">Advanced List</button>
        <div className="flex gap-1 pt-[2px] pl-6">
          <Spinner id="limit" label="Record limit" value="0" className="w-[39px]" />
          <input aria-label="List name" type="text" defaultValue="Quote Search List" className="h-[19px] w-[161px] border border-[#b4b4b4] bg-white px-px outline-none" />
        </div>
        <span className="ml-auto pt-[3px] pr-[5px] text-black">Record 5 of 22</span>
      </div>
    </main>
  );
}

/* ------------------------------------------------------------------ */
/* Status bar and Windows taskbar                                      */
/* ------------------------------------------------------------------ */

function StatusBar() {
  const cell = 'flex h-[19px] items-center border-white';
  return (
    <footer className="flex h-[23px] items-center bg-[#414a61] text-white">
      <span className={clsx(cell, 'w-[77px] border-r pl-1')}>User: DD</span>
      <span className={clsx(cell, 'w-[112px] justify-between border-r pr-[6px] pl-[6px]')}>
        Location: MAIN
        <Svg w={16} h={16}><circle cx="6" cy="3.500" r="3.500" fill="#e8e8e8" /><path d="M0 14q0-6 6-6 3 0 4 1l-3 6H0z" fill="#e8e8e8" /><circle cx="11" cy="11" r="4.500" fill="#8fb4e4" stroke="#dde" /><path d="M7 11h8M11 7v8" stroke="#fff" /></Svg>
      </span>
      <span className={clsx(cell, 'w-[252px] border-r pl-[5px]')}>Server: j2s-s2022-7.happencloud.local\JIM2</span>
      <span className={clsx(cell, 'w-[226px] border-r pl-[5px]')}>Licensed to: OPENDOORS NZ LIMITED</span>
      <div className="ml-auto flex">
        <span className={clsx(cell, 'w-[87px] gap-[3px] border-l pl-[7px]')}>
          <Svg w={15} h={15}><path d="M5 1h7l3 3v11H3V8z" fill="#f4f4f4" /><path d="M6 8h7M6 10.500h7M6 13h7" stroke="#3b6fb6" /><circle cx="4.500" cy="4.500" r="4" fill="#ddd" stroke="#fff" /><path d="M4.500 2v3H7" stroke="#555" /></Svg>
          0:00 / 0:00
        </span>
        <span className={clsx(cell, 'w-[29px] border-l pl-[6px]')}>
          <Svg w={15} h={15}><circle cx="4.500" cy="4.500" r="4" stroke="#707888" /><path d="M4.500 2v3H7M8 1h4l2 2v4M3 9v4h4M11 8v6M8 11h6" stroke="#707888" strokeWidth="1.500" /></Svg>
        </span>
        <span className={clsx(cell, 'w-[38px] gap-1 border-l pl-[7px]')}>
          <Svg w={15} h={15}><circle cx="7.500" cy="7.500" r="7" fill="#fff" /><path d="M7.500 3v5h4" stroke="#3b6fb6" strokeWidth="1.500" /></Svg>
          0
        </span>
        <span className={clsx(cell, 'w-7 border-l pl-[6px]')}>
          <Svg w={15} h={15}><path d="M0 0h15v15H0z" fill="#687080" /><path d="M1 4h13M2 7h6M2 9.500h6M2 12h6M10.500 6v8" stroke="#414a61" /></Svg>
        </span>
      </div>
    </footer>
  );
}

const ChromeMark = () => (
  <Svg size={24}>
    <circle cx="12" cy="12" r="12" fill="#e33b2e" />
    <path d="M12 12L1.600 6A12 12 0 0 0 11 24l6-9z" fill="#2e9e4b" />
    <path d="M12 12l-1 12A12 12 0 0 0 22.800 7H12z" fill="#fbc116" />
    <circle cx="12" cy="12" r="5.500" fill="#fff" /><circle cx="12" cy="12" r="4.300" fill="#2f7de1" />
  </Svg>
);

const glyph = { fontFamily: 'Open Sans, sans-serif', fontWeight: 700, fill: '#fff', textAnchor: 'middle' as const };

const apps: { name: string; running?: boolean; active?: boolean; icon: ReactNode }[] = [
  { name: 'File Explorer', running: true, icon: <Svg size={24}><path d="M0 3q0-2 2-2h6l3 3v5H0z" fill="#c69a17" /><path d="M0 5h22q2 0 2 2v13q0 2-2 2H2q-2 0-2-2z" fill="#ffcf48" /><path d="M4 18q0-3 3-3h9q3 0 3 3v4H4z" fill="#1d74c4" /></Svg> },
  { name: 'Notes', running: true, icon: <Svg size={24}><rect x="1" y="1" width="22" height="22" rx="3" fill="#fcc63a" /><path d="M20 10q-8 1-9 7l-1 4q2 1 4 0 6-4 6-11z" fill="#7d4fe0" /><path d="M9 23l4-5" stroke="#5432b0" strokeWidth="1.500" /></Svg> },
  { name: 'Snipping Tool', icon: <Svg size={24}><path d="M12 3H2.500v9H10" stroke="#e2483d" strokeWidth="3" strokeDasharray="3 1.500" /><path d="M13 4v14M8 13h13" stroke="#999" strokeWidth="2.500" /><circle cx="21" cy="14" r="2.500" stroke="#2290e8" strokeWidth="2" /><circle cx="13" cy="21" r="2.500" stroke="#2290e8" strokeWidth="2" /></Svg> },
  { name: 'Word', running: true, icon: <Svg size={24}><path d="M7 1h13q2 0 2 2v6H5V3q0-2 2-2z" fill="#6cc3f7" /><path d="M5 8h17v8H5z" fill="#2f86e8" /><path d="M5 15h17v6q0 2-2 2H5z" fill="#1747a8" /><rect y="10" width="12" height="12" rx="2" fill="#1556b4" /><text x="6" y="19.500" fontSize="10" {...glyph}>W</text></Svg> },
  { name: 'Chrome', icon: <ChromeMark /> },
  { name: 'To Do', icon: <Svg size={24}><path d="M0 13l4-4 6 6-4 5z" fill="#1c5fb8" /><path d="M6 19L20 4l4 4L10 22z" fill="#3d95ec" /></Svg> },
  { name: 'Microsoft Store', icon: <Svg size={24}><path d="M7 6V3q0-1.500 1.500-1.500h7Q17 1.500 17 3v3" stroke="#3ba7ea" strokeWidth="2" /><path d="M1 5h22v15q0 3-3 3H4q-3 0-3-3z" fill="#1d4f9c" /><path d="M7 9h4v4H7z" fill="#f25022" /><path d="M13 9h4v4h-4z" fill="#7fba00" /><path d="M7 15h4v4H7z" fill="#00a4ef" /><path d="M13 15h4v4h-4z" fill="#ffb900" /></Svg> },
  { name: 'Excel', running: true, icon: <Svg size={24}><path d="M7 1h15v8H5V3q0-2 2-2z" fill="#8ee06a" /><path d="M5 8h17v7H5z" fill="#3bb34a" /><path d="M5 15h17v6q0 2-2 2H5z" fill="#1b7f37" /><rect y="10" width="12" height="12" rx="2" fill="#125c2c" /><text x="6" y="19.500" fontSize="10" {...glyph}>X</text></Svg> },
  { name: 'PowerPoint', icon: <Svg size={24}><circle cx="13" cy="11.500" r="11" fill="#e2543c" /><path d="M13 1a11 11 0 0 1 11 11H13z" fill="#f4a98a" /><path d="M13 12h11a11 11 0 0 1-8 10z" fill="#c23a26" /><rect y="10" width="12" height="12" rx="2" fill="#b3261e" /><text x="6" y="19.500" fontSize="10" {...glyph}>P</text></Svg> },
  { name: 'Windows App', running: true, icon: <Svg size={24}><rect width="24" height="24" rx="1.500" fill="#1093e0" /><path d="M0 0h24L0 24z" fill="#2fb0f0" /><path d="M6 6h5.500v5.500H6zM12.500 6H18v5.500h-5.500zM6 12.500h5.500V18H6zM12.500 12.500H18V18h-5.500z" fill="#fff" /></Svg> },
  { name: 'Chrome profile', running: true, icon: <span className="relative"><ChromeMark /><span className="absolute -top-1 -right-[5px]"><Svg size={17}><circle cx="8.500" cy="8.500" r="8" fill="#8d7b78" /><path d="M7 5l3-1 2 9H7z" fill="#eee" /><path d="M4 7l2 6H4z" fill="#333" /></Svg></span></span> },
  { name: 'Bluebeam', running: true, icon: <span className="relative"><Svg size={24}><path d="M0 0h23l-3 20-9 4-8-3z" fill="#e5482c" /><text x="11" y="18" fontSize="16" {...glyph}>B</text></Svg><span className="absolute -top-1 -right-1"><Svg size={15}><circle cx="7.500" cy="7.500" r="7" fill="#7db62f" stroke="#4b6d1e" /><path d="M4 8l2.500 2.500L11 5" stroke="#fff" strokeWidth="2" /></Svg></span></span> },
  { name: 'Teams', running: true, icon: <span className="relative"><Svg size={24}><circle cx="10" cy="4" r="3.500" fill="#8b6fe8" /><path d="M6 9h14q3 0 3 3v4q0 6-6 7h-5q-6-2-6-8z" fill="#7b5be0" /><path d="M6 9h8v14q-8-1-8-8z" fill="#5ba4f4" /><rect y="11" width="11" height="11" rx="2" fill="#2467c4" /><text x="5.500" y="20" fontSize="9" {...glyph}>T</text></Svg><span className="absolute -top-1 -right-1"><Svg size={14}><circle cx="7" cy="7" r="7" fill="#15801c" /><path d="M4 7l2.500 2.500L10 5" stroke="#fff" strokeWidth="1.500" /></Svg></span></span> },
  { name: 'Jim2', running: true, active: true, icon: <span className="relative"><JimLogo size={24} /><span className="absolute -top-1 -right-[5px]"><Svg size={15}><circle cx="7.500" cy="7.500" r="7.500" fill="#1590e6" /><path d="M4 4h3v3H4zM8 4h3v3H8zM4 8h3v3H4zM8 8h3v3H8z" fill="#fff" /></Svg></span></span> },
  { name: 'Search assistant', running: true, icon: <Svg size={20}><rect width="20" height="20" rx="4" fill="#2a1a5e" /><circle cx="10" cy="9.500" r="4.500" stroke="#d9c8ff" strokeWidth="2" /><path d="M10 9l5 6" stroke="#d9c8ff" strokeWidth="2" /></Svg> },
];

function Taskbar() {
  return (
    <div className="flex h-12 items-center border-t border-[#c9c9c9] bg-[#eeeeee] pb-[2px] pl-[21px] font-['Open_Sans',sans-serif] text-[#222]">
      <button aria-label="Start">
        <Svg size={23}><path d="M0 0h11v11H0zM12 0h11v11H12z" fill="#27b0ee" /><path d="M0 12h11v11H0zM12 12h11v11H12z" fill="#0f83d6" /></Svg>
      </button>
      <label className="ml-[14px] flex h-[31px] w-[218px] items-center gap-[11px] rounded-full border border-[#dcdcdc] bg-[#fbfbfb] pl-[10px]">
        <Svg w={14} h={15}><circle cx="6.500" cy="6.500" r="5.500" stroke="#333" strokeWidth="1.700" /><path d="M10 10.500l4 4" stroke="#333" strokeWidth="1.700" /></Svg>
        <input type="text" placeholder="Search" className="w-32 text-[13px] outline-none placeholder:text-[#666]" />
      </label>
      <div className="ml-[3px] flex">
        {apps.map((app) => (
          <button key={app.name} aria-label={app.name} className={clsx('relative flex h-[38px] items-center justify-center', app.active ? 'mx-1 w-9 rounded bg-[#fafafa]' : 'w-11')}>
            {app.icon}
            {app.running && (
              <span className={clsx('absolute bottom-0 h-[3px] rounded-full', app.active ? 'w-4 bg-[#0f83d6]' : 'w-[6px] bg-[#888]')} />
            )}
          </button>
        ))}
      </div>
      <div className="ml-auto flex items-center pr-[19px] text-xs">
        <button aria-label="Hidden icons" className="flex w-8 justify-center"><Svg w={11} h={7}><path d="M1 6l4.500-4.500L10 6" stroke="#333" strokeWidth="1.500" /></Svg></button>
        <button aria-label="VL" className="flex w-8 justify-center"><Svg w={16} h={16}><path d="M1 1l4 9 4-9" stroke="#6fa8d6" strokeWidth="2.500" /><path d="M9.500 5v9.500H16" stroke="#777f88" strokeWidth="2" /></Svg></button>
        <button aria-label="Antivirus" className="flex w-8 justify-center"><Svg size={16}><circle cx="8" cy="8" r="8" fill="#e0392b" /><path d="M2 12q5-1 6-5t5-3q1 6-4 9-4 2-7-1z" fill="#fff" opacity=".85" /><circle cx="8.500" cy="8.500" r="2.500" fill="#e0392b" /></Svg></button>
        <button aria-label="OneNote" className="flex w-8 justify-center"><Svg size={16}><rect x="2" width="14" height="16" rx="2" fill="#a44fe0" /><path d="M4 0h10q2 0 2 2v3H3z" fill="#d28cf7" /><rect y="6" width="9" height="9" rx="1" fill="#6a21b0" /><text x="4.500" y="13.500" fontSize="8" {...glyph}>N</text></Svg></button>
        <button aria-label="Remote" className="flex w-8 justify-center"><Svg w={16} h={12}><path d="M1 4.500h10v6.500H1zM4 1h11v7" stroke="#21b0c4" strokeWidth="2" /></Svg></button>
        <button aria-label="OneDrive" className="flex w-8 justify-center"><Svg w={16} h={12}><path d="M4 11.500a4 4 0 0 1 0-8 5 5 0 0 1 8.500 1 3.500 3.500 0 0 1 0 7z" fill="#1f8fe8" /><path d="M1 9l6-5 8 6-2 1.500H4z" fill="#3db4f6" /></Svg></button>
        <button aria-label="Microphone" className="flex w-8 justify-center"><Svg w={12} h={16}><rect x="3.500" y=".5" width="5" height="9" rx="2.500" stroke="#2b5faa" /><path d="M1 7q0 5 5 5t5-5M6 12v4" stroke="#2b5faa" strokeWidth="1.300" /></Svg></button>
        <button className="w-11 text-center">ENG</button>
        <button aria-label="Network" className="flex w-8 justify-center"><Svg w={16} h={16}><path d="M10 1.500H1.500v10h10V8M4 15h6M7 12v3" stroke="#333" strokeWidth="1.200" /><path d="M11.500.500h4v5h-4zM13.500 6v9" stroke="#333" strokeWidth="1.200" /></Svg></button>
        <button aria-label="Muted" className="flex w-4 justify-center"><Svg w={16} h={12}><path d="M1 4h2.500L7 1v10L3.500 8H1zM10 4l4 4M14 4l-4 4" stroke="#333" /></Svg></button>
        <div className="w-20 text-right leading-4">
          <div>10:43 am</div>
          <div>13/03/2026</div>
        </div>
      </div>
    </div>
  );
}

export default function App() {
  return (
    <div className="flex min-h-screen flex-col bg-[#f0f0f0] font-['DejaVu_Sans_Condensed','DejaVu_Sans',sans-serif] text-[11px] leading-4">
      <TitleBar />
      <TabBar />
      <Ribbon />
      <div className="flex flex-1">
        <NavPanel />
        <QuotePanel />
      </div>
      <StatusBar />
      <Taskbar />
    </div>
  );
}
